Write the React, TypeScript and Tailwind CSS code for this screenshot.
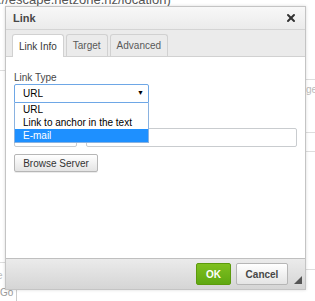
import { X } from "lucide-react"

const font = { fontFamily: '"Liberation Sans", Arial, sans-serif' }

function Tab({ label, active }: { label: string; active?: boolean }) {
    return (
        <div
            className={
                "flex items-center rounded-t-[3px] border border-b-0 border-[#d1d1d1] px-[6px] text-[10px] " +
                (active ? "-mb-px h-[23px] bg-white text-[#383838]" : "h-[22px] bg-[#ebebeb] text-[#595959]")
            }
        >
            {label}
        </div>
    )
}

export default function App() {
    return (
        <div className="relative h-[301px] w-[315px] overflow-hidden bg-white" style={font}>
            {/* page behind the dialog */}
            <div className="absolute -top-[8px] -left-[2px] text-[13px] leading-[15px] whitespace-nowrap text-[#555]">
                ://escape.netzone.nz/location)
            </div>
            <div className="absolute top-[70px] left-0 h-px w-[6px] bg-[#ddd]" />
            <div className="absolute top-[82px] -right-[2px] text-[10px] text-[#bbb]">ge</div>
            <div className="absolute top-[79px] right-0 h-px w-[10px] bg-[#ddd]" />
            <div className="absolute top-[132px] right-0 h-px w-[10px] bg-[#ddd]" />
            <div className="absolute top-[151px] right-0 h-px w-[10px] bg-[#ddd]" />
            <div className="absolute top-[262px] left-0 h-px w-[6px] bg-[#ddd]" />
            <div className="absolute top-[269px] right-0 h-px w-[10px] bg-[#ddd]" />
            <div className="absolute top-[268px] -left-[3px] text-[10px] text-[#bbb]">e</div>
            <div className="absolute top-[283px] left-0 flex h-[18px] w-[17px] items-center border-r border-[#ccc] text-[10px] text-[#999]">
                Go
            </div>

            {/* dialog */}
            <div className="absolute top-[6px] left-[5px] flex h-[284px] w-[301px] flex-col border border-[#c4c4c4] bg-white shadow-[0_0_3px_rgba(0,0,0,0.15)]">
                <div className="flex h-[23px] items-center justify-between border-b border-[#d4d4d4] bg-gradient-to-b from-[#f8f8f8] to-[#ebebeb] pr-[8px] pl-[7px]">
                    <span className="text-[11px] font-bold text-[#474747]">Link</span>
                    <X size={12} strokeWidth={4} className="text-[#333]" />
                </div>
                <div className="flex h-[27px] items-end gap-[2px] border-b border-[#d1d1d1] bg-[#ebebeb] pl-[6px]">
                    <Tab label="Link Info" active />
                    <Tab label="Target" />
                    <Tab label="Advanced" />
                </div>

                <div className="relative flex-1 px-[8px] pt-[15px] text-[10px] text-[#474747]">
                    <div className="leading-[12px]">Link Type</div>
                    <div className="relative w-[135px]">
                        <div className="flex h-[19px] items-center justify-between rounded-t-[2px] border border-[#6ea7e6] bg-white pr-[4px] pl-[8px] text-[10px] text-black">
                            <span>URL</span>
                            <span className="text-[7px]">▼</span>
                        </div>
                        <div className="absolute top-[19px] left-0 z-10 w-[135px] border border-t-0 border-[#8ab2e0] bg-white text-[10px] leading-[13px] whitespace-nowrap text-black">
                            <div className="pl-[8px]">URL</div>
                            <div className="pl-[8px]">Link to anchor in the text</div>
                            <div className="bg-[#1e90ff] pl-[8px] text-white">E-mail</div>
                        </div>
                    </div>

                    <div className="mt-[25px] flex gap-[9px]">
                        <div className="h-[19px] w-[63px] rounded-[2px] border border-[#c9cccf] bg-white" />
                        <div className="h-[19px] w-[212px] rounded-[2px] border border-[#c9cccf] bg-white" />
                    </div>

                    <div className="mt-[7px] flex h-[18px] w-[84px] items-center justify-center rounded-[2px] border border-[#b6b6b6] bg-gradient-to-b from-[#fff] to-[#e4e4e4] text-[10px] text-[#333] shadow-[0_1px_0_rgba(0,0,0,0.08)]">
                        Browse Server
                    </div>
                </div>

                <div className="relative flex h-[31px] items-center justify-end gap-[5px] border-t border-[#bfbfbf] bg-gradient-to-b from-[#ebebeb] to-[#d5d5d5] pr-[17px]">
                    <div className="flex h-[22px] w-[35px] items-center justify-center rounded-[2px] border border-[#5c9a0c] bg-gradient-to-b from-[#7fc01f] to-[#5fa812] text-[10px] font-bold text-white">
                        OK
                    </div>
                    <div className="flex h-[22px] w-[52px] items-center justify-center rounded-[2px] border border-[#b6b6b6] bg-gradient-to-b from-[#fff] to-[#e4e4e4] text-[10px] font-bold text-[#474747]">
                        Cancel
                    </div>
                    <svg className="absolute right-[3px] bottom-[5px]" width="8" height="8" viewBox="0 0 8 8">
                        <polygon points="8,0 8,8 0,8" fill="#555" />
                    </svg>
                </div>
            </div>
        </div>
    )
}
